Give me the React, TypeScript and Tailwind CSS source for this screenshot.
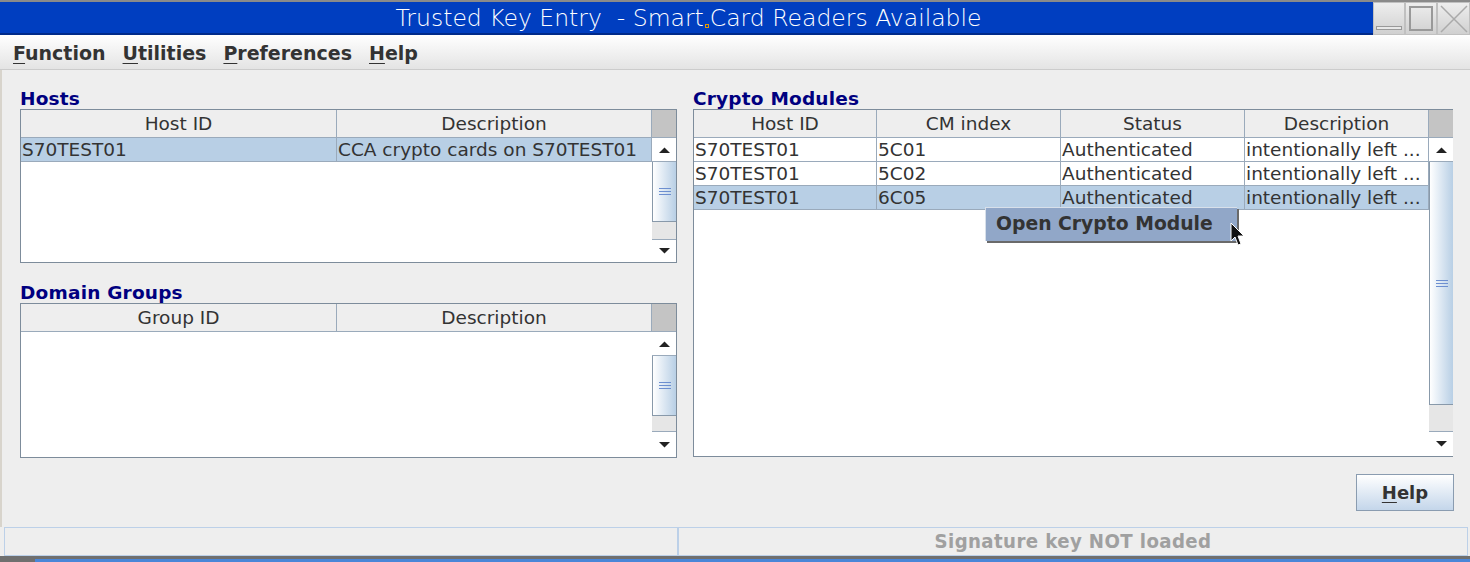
import React from 'react';

const FONT = { fontFamily: '"DejaVu Sans", "Liberation Sans", sans-serif' };

type Col = { title: string; width: number };

interface TableProps {
    cols: Col[];
    rows: string[][];
    selected?: number;
    height: number;
    thumbH: number;
    trackH: number;
}

const UpArrow = () => (
    <svg width="13" height="8" viewBox="0 0 13 8"><path d="M1 7 L6.5 1.5 L12 7 Z" fill="#222" /></svg>
);
const DownArrow = () => (
    <svg width="13" height="8" viewBox="0 0 13 8"><path d="M1 1 L6.5 6.5 L12 1 Z" fill="#222" /></svg>
);

const Scrollbar: React.FC<{ thumbH: number; trackH: number }> = ({ thumbH, trackH }) => (
    <div className="flex flex-col w-[24px] shrink-0 h-full">
        <div className="h-[28px] bg-[#c4c4c4] border-b border-[#9aaabb] shrink-0" />
        <div className="h-[24px] shrink-0 bg-white border-b border-[#9aaabb] flex items-center justify-center">
            <UpArrow />
        </div>
        <div
            className="shrink-0 bg-gradient-to-r from-white to-[#b8cfe5] border-l border-[#7a7a7a] border-b border-[#8899aa] flex flex-col items-center justify-center gap-[2px]"
            style={{ height: thumbH }}
        >
            <div className="w-[12px] h-px bg-[#6d8fd0]" />
            <div className="w-[12px] h-px bg-[#6d8fd0]" />
            <div className="w-[12px] h-px bg-[#6d8fd0]" />
        </div>
        <div className="shrink-0 bg-[#e6e6e6] border-b border-[#9aaabb]" style={{ height: trackH }} />
        <div className="flex-1 bg-white flex items-center justify-center">
            <DownArrow />
        </div>
    </div>
);

const Table: React.FC<TableProps> = ({ cols, rows, selected, height, thumbH, trackH }) => (
    <div className="flex border border-[#7d8c9b] bg-white" style={{ height }}>
        <div className="flex-1 flex flex-col">
            <div className="flex h-[28px] bg-[#eeeeee] border-b border-[#9aaabb] shrink-0">
                {cols.map((c, i) => (
                    <div
                        key={i}
                        className="flex items-center justify-center text-[18.5px] text-[#333] border-r border-[#9aaabb] shrink-0"
                        style={{ width: c.width }}
                    >
                        {c.title}
                    </div>
                ))}
            </div>
            {rows.map((r, ri) => (
                <div
                    key={ri}
                    className={`flex h-[24px] border-b border-[#9aaabb] ${ri === selected ? 'bg-[#b8cfe5]' : 'bg-white'}`}
                >
                    {r.map((cell, ci) => (
                        <div
                            key={ci}
                            className="flex items-center pl-[1px] pt-[1px] text-[18.5px] text-[#333] border-r border-[#9aaabb] shrink-0 whitespace-nowrap overflow-hidden"
                            style={{ width: cols[ci].width }}
                        >
                            {cell}
                        </div>
                    ))}
                </div>
            ))}
        </div>
        <Scrollbar thumbH={thumbH} trackH={trackH} />
    </div>
);

const Label: React.FC<{ children: React.ReactNode }> = ({ children }) => (
    <div className="h-[21px] text-[18.5px] font-bold text-[#000080] leading-[21px] tracking-[0.2px]">{children}</div>
);

const MenuItem: React.FC<{ first: string; rest: string }> = ({ first, rest }) => (
    <span className="text-[19px] font-bold text-[#333]">
        <span className="underline underline-offset-[3px]">{first}</span>
        {rest}
    </span>
);

export default function App() {
    return (
        <div className="w-[1470px] h-[562px] bg-[#eeeeee] flex flex-col overflow-hidden relative" style={FONT}>
            {/* title bar */}
            <div className="h-[35px] shrink-0 flex border-t-2 border-[#8a8a8a] bg-[#003ec0]">
                <div className="flex-1 flex items-center justify-center pt-[3px] pl-[4px] text-white text-[23.5px] font-light border-b-2 border-[#002a8a]">
                    Trusted Key Entry&nbsp; - Smart<span className="inline-block w-[4px] h-[4px] border border-[#e69a00] self-end mb-[5px] mx-[1px]" />Card Readers Available
                </div>
                <div className="flex w-[97px] bg-[#dcdcdc]">
                    <div className="w-[32px] h-full border border-[#c0c0c0] bg-gradient-to-b from-[#eeeeee] to-[#d0d0d0] flex items-end justify-center pb-[4px]">
                        <div className="w-[26px] h-[4px] border border-[#999] bg-[#e8e8e8]" />
                    </div>
                    <div className="w-[32px] h-full border border-[#c0c0c0] bg-gradient-to-b from-[#eeeeee] to-[#d0d0d0] flex items-center justify-center">
                        <div className="w-[24px] h-[25px] border-2 border-[#999]" />
                    </div>
                    <div className="w-[33px] h-full border border-[#c0c0c0] bg-gradient-to-b from-[#eeeeee] to-[#d0d0d0] flex items-center justify-center">
                        <svg width="30" height="30" viewBox="0 0 30 30"><path d="M2 2 L28 28 M28 2 L2 28" stroke="#aaa" strokeWidth="1.5" /></svg>
                    </div>
                </div>
            </div>
            {/* menu bar */}
            <div className="h-[35px] shrink-0 flex items-center gap-[17px] pl-[13px] pt-[3px] bg-gradient-to-b from-white to-[#e4e4e4] border-b border-[#cccccc]">
                <MenuItem first="F" rest="unction" />
                <MenuItem first="U" rest="tilities" />
                <MenuItem first="P" rest="references" />
                <MenuItem first="H" rest="elp" />
            </div>
            {/* content */}
            <div className="flex gap-[16px] pl-[18px] pr-[17px] pt-[18px] border-l-2 border-[#d8d4cc]">
                <div className="w-[657px] flex flex-col">
                    <Label>Hosts</Label>
                    <Table
                        cols={[{ title: 'Host ID', width: 316 }, { title: 'Description', width: 315 }]}
                        rows={[['S70TEST01', 'CCA crypto cards on S70TEST01']]}
                        selected={0}
                        height={154}
                        thumbH={60}
                        trackH={18}
                    />
                    <div className="h-[19px]" />
                    <Label>Domain Groups</Label>
                    <Table
                        cols={[{ title: 'Group ID', width: 316 }, { title: 'Description', width: 315 }]}
                        rows={[]}
                        height={155}
                        thumbH={60}
                        trackH={16}
                    />
                </div>
                <div className="w-[760px] flex flex-col">
                    <Label>Crypto Modules</Label>
                    <Table
                        cols={[
                            { title: 'Host ID', width: 183 },
                            { title: 'CM index', width: 184 },
                            { title: 'Status', width: 184 },
                            { title: 'Description', width: 184 },
                        ]}
                        rows={[
                            ['S70TEST01', '5C01', 'Authenticated', 'intentionally left ...'],
                            ['S70TEST01', '5C02', 'Authenticated', 'intentionally left ...'],
                            ['S70TEST01', '6C05', 'Authenticated', 'intentionally left ...'],
                        ]}
                        selected={2}
                        height={348}
                        thumbH={243}
                        trackH={27}
                    />
                </div>
            </div>
            {/* help row */}
            <div className="flex justify-end pr-[16px] pt-[16px] h-[69px] border-l-2 border-[#d8d4cc]">
                <button className="w-[98px] h-[37px] border border-[#8a9cb0] bg-gradient-to-b from-white to-[#c4d6ea] text-[18px] font-bold text-[#333]">
                    <span className="underline underline-offset-[3px]">H</span>elp
                </button>
            </div>
            {/* status bar */}
            <div className="flex h-[29px] pl-[4px] pr-[2px] shrink-0">
                <div className="w-[674px] border border-[#bcd0e8]" />
                <div
                    className="flex-1 border border-[#bcd0e8] flex items-center justify-center text-[20.2px] font-semibold text-[#a0a0a0] tracking-[0.4px]"
                    style={{ fontFamily: '"DejaVu Sans Condensed", "DejaVu Sans", sans-serif', fontStretch: 'condensed' }}
                >
                    Signature key NOT loaded
                </div>
            </div>
            <div className="flex-1 bg-[#6f6f6f] flex flex-col">
                <div className="h-[3px]" />
                <div className="flex-1 ml-[35px] bg-[#4a86d8]" />
            </div>

            {/* popup menu */}
            <div className="absolute left-[985px] top-[207px] w-[252px] h-[34px] bg-[#91a7c8] border-t border-l border-[#d8e0ea] shadow-[2px_2px_0_#6a6a6a] flex items-center pl-[10px] text-[18.8px] font-bold text-[#333]">
                Open Crypto Module
            </div>
            {/* cursor */}
            <svg className="absolute left-[1230px] top-[222px]" width="16" height="26" viewBox="0 0 16 26">
                <path d="M1 1 L1 19 L5 15 L8 23 L11 22 L8 14 L14 14 Z" fill="#111" stroke="#fff" strokeWidth="1" />
            </svg>
        </div>
    );
}
